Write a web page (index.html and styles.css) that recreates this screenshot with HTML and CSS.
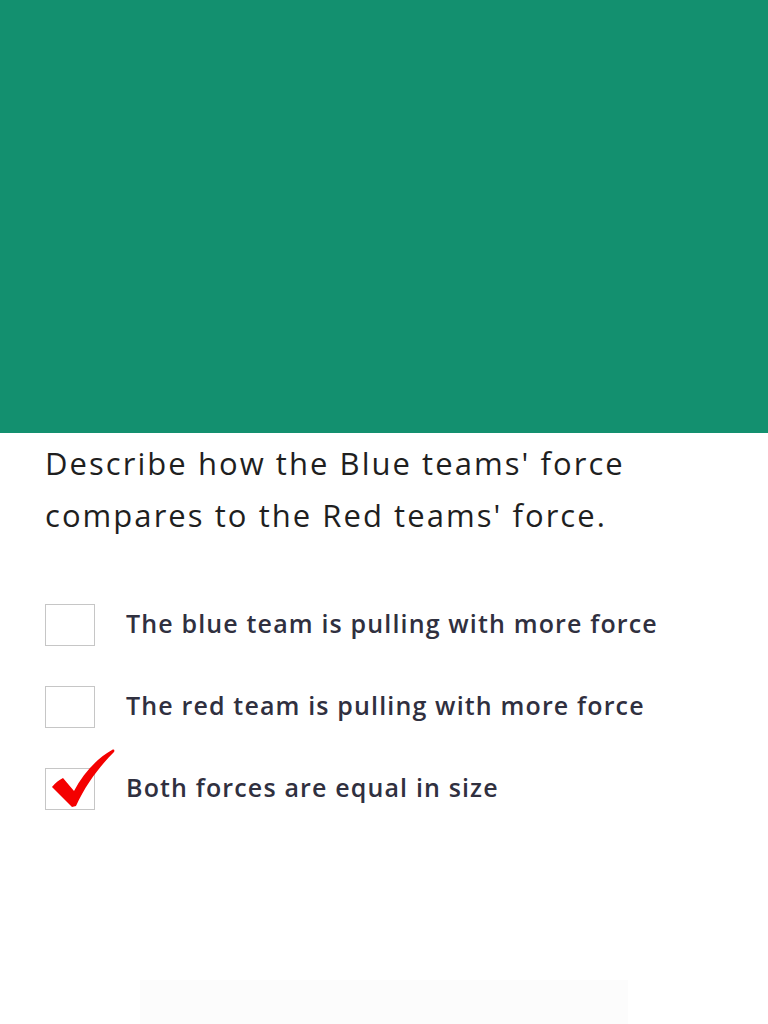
FILE: index.html
```html
<!DOCTYPE html>
<html lang="en">
<head>
<meta charset="utf-8">
<title>Question</title>
<link rel="stylesheet" href="styles.css">
</head>
<body>
<div class="page">
  <header class="banner"></header>
  <main class="content">
    <p class="question">Describe how the Blue teams' force compares to the Red teams' force.</p>
    <ul class="options">
      <li class="option">
        <span class="box"></span>
        <span class="label">The blue team is pulling with more force</span>
      </li>
      <li class="option">
        <span class="box"></span>
        <span class="label">The red team is pulling with more force</span>
      </li>
      <li class="option">
        <span class="box">
          <svg class="check" width="70" height="64" viewBox="0 0 70 64" aria-hidden="true">
            <path d="M2,41 C5,37 9,34 13,32 L24,45 C33,28 46,13 62,4 C64,3 65,4 64,6 C50,20 36,38 26,60 L22,61 Z" fill="#f40000"/>
          </svg>
        </span>
        <span class="label">Both forces are equal in size</span>
      </li>
    </ul>
    <div class="footer-bar"></div>
  </main>
</div>
</body>
</html>
```
FILE: styles.css
```css
html, body {
  margin: 0;
  padding: 0;
  background: #ffffff;
}
.page {
  width: 768px;
  height: 1024px;
  overflow: hidden;
  display: flex;
  flex-direction: column;
}
.banner {
  height: 433px;
  background: #13906f;
  flex: none;
}
.content {
  flex: 1;
  display: flex;
  flex-direction: column;
  padding: 4px 0 0 45px;
}
.question {
  margin: 0;
  width: 660px;
  font-family: "Open Sans", "Liberation Sans", sans-serif;
  font-size: 31px;
  letter-spacing: 2.05px;
  line-height: 52px;
  color: #1f1f1f;
  font-weight: 400;
}
.options {
  list-style: none;
  margin: 63px 0 0 0;
  padding: 0;
  display: flex;
  flex-direction: column;
  gap: 40px;
}
.option {
  display: flex;
  align-items: center;
  gap: 31px;
  height: 42px;
}
.box {
  position: relative;
  flex: none;
  width: 48px;
  height: 40px;
  border: 1px solid #c6c6c6;
  background: #fff;
}
.check {
  position: absolute;
  left: 4px;
  top: -23px;
}
.label {
  font-family: "Open Sans", "Liberation Sans", sans-serif;
  font-weight: 600;
  font-size: 25px;
  letter-spacing: 1.15px;
  color: #30303f;
  position: relative;
  top: -2px;
}
.footer-bar {
  margin: auto 0 0 95px;
  width: 488px;
  height: 44px;
  background: #fcfcfc;
}
```
